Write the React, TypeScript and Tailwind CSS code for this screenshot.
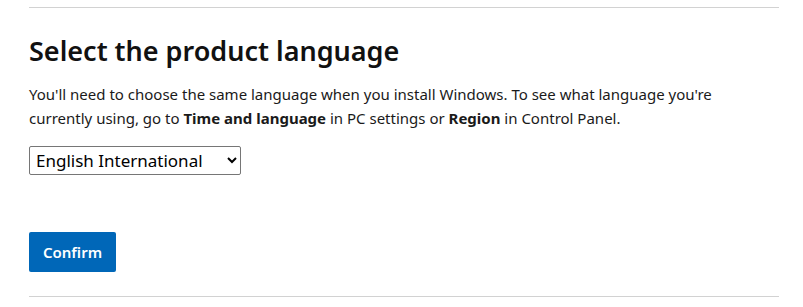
export default function App() {
    return (
        <div className="min-h-screen bg-white pt-[7px] font-['Noto_Sans',sans-serif] text-black">
            <div className="ml-[29px] w-[750px]">
                <div className="border-t border-[#d2d2d2]" />
                <section className="pt-[25px] pb-[24px]">
                    <h2 className="text-[27px] font-semibold leading-[36px] text-[#111]">
                        Select the product language
                    </h2>
                    <p className="mt-[13px] max-w-[720px] text-[15px] leading-[24px] text-[#1a1a1a]">
                        You'll need to choose the same language when you install Windows. To see what
                        language you're currently using, go to <b>Time and language</b> in PC settings or{' '}
                        <b>Region</b> in Control Panel.
                    </p>
                    <select
                        defaultValue="English International"
                        className="mt-[16px] h-[29px] w-[212px] rounded-[2px] border border-[#767676] bg-white pl-[2px] text-[17px] text-black"
                    >
                        <option>English International</option>
                        <option>English (United States)</option>
                    </select>
                    <div className="mt-[57px]">
                        <button className="h-[40px] w-[87px] rounded-[2px] bg-[#0067b8] text-[15px] font-semibold text-white">
                            Confirm
                        </button>
                    </div>
                </section>
                <div className="border-t border-[#d2d2d2]" />
            </div>
        </div>
    );
}
